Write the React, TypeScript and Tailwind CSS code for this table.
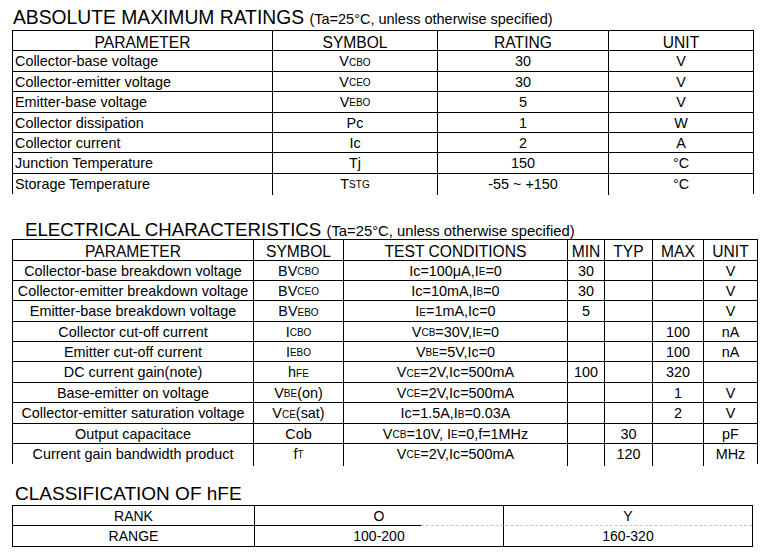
import type { ReactNode } from "react";

// small-caps style subscript used in the datasheet symbols
const Sub = ({ children }: { children: ReactNode }) => (
  <span className="text-[10px]">{children}</span>
);

type Cell = ReactNode;

export default function App() {
  const ratings: Cell[][] = [
    ["Collector-base voltage", <>V<Sub>CBO</Sub></>, "30", "V"],
    ["Collector-emitter voltage", <>V<Sub>CEO</Sub></>, "30", "V"],
    ["Emitter-base voltage", <>V<Sub>EBO</Sub></>, "5", "V"],
    ["Collector dissipation", "Pc", "1", "W"],
    ["Collector current", "Ic", "2", "A"],
    ["Junction Temperature", "Tj", "150", "°C"],
    ["Storage Temperature", <>T<Sub>STG</Sub></>, "-55 ~ +150", "°C"],
  ];

  const electrical: Cell[][] = [
    ["Collector-base breakdown voltage", <>BV<Sub>CBO</Sub></>, <>Ic=100μA,I<Sub>E</Sub>=0</>, "30", "", "", "V"],
    ["Collector-emitter breakdown voltage", <>BV<Sub>CEO</Sub></>, <>Ic=10mA,I<Sub>B</Sub>=0</>, "30", "", "", "V"],
    ["Emitter-base breakdown voltage", <>BV<Sub>EBO</Sub></>, <>I<Sub>E</Sub>=1mA,Ic=0</>, "5", "", "", "V"],
    ["Collector cut-off current", <>I<Sub>CBO</Sub></>, <>V<Sub>CB</Sub>=30V,I<Sub>E</Sub>=0</>, "", "", "100", "nA"],
    ["Emitter cut-off current", <>I<Sub>EBO</Sub></>, <>V<Sub>BE</Sub>=5V,Ic=0</>, "", "", "100", "nA"],
    ["DC current gain(note)", <>h<Sub>FE</Sub></>, <>V<Sub>CE</Sub>=2V,Ic=500mA</>, "100", "", "320", ""],
    ["Base-emitter on voltage", <>V<Sub>BE</Sub>(on)</>, <>V<Sub>CE</Sub>=2V,Ic=500mA</>, "", "", "1", "V"],
    ["Collector-emitter saturation voltage", <>V<Sub>CE</Sub>(sat)</>, <>Ic=1.5A,I<Sub>B</Sub>=0.03A</>, "", "", "2", "V"],
    ["Output capacitace", "Cob", <>V<Sub>CB</Sub> =10V, I<Sub>E</Sub> =0,f=1MHz</>, "", "30", "", "pF"],
    ["Current gain bandwidth product", <>f<Sub>T</Sub></>, <>V<Sub>CE</Sub>=2V,Ic=500mA</>, "", "120", "", "MHz"],
  ];

  return (
    <div className="w-[768px] h-[560px] bg-white text-black font-['Liberation_Sans',Arial,sans-serif] overflow-hidden pt-[7px]">
      {/* Absolute maximum ratings */}
      <div className="pl-[13px] h-[22px] leading-[22px] text-[19.3px] whitespace-nowrap">
        ABSOLUTE MAXIMUM RATINGS{" "}
        <span className="text-[14.5px]">(Ta=25°C, unless otherwise specified)</span>
      </div>
      <div className="ml-[12px] mt-[1px] w-[742px] border-l border-r border-t border-black">
        <div className="grid grid-cols-[260px_165px_171px_1fr] h-[20.4px] border-b border-black text-[15.6px]">
          {["PARAMETER", "SYMBOL", "RATING", "UNIT"].map((h, i) => (
            <div key={h} className={`flex items-center justify-center ${i < 3 ? "border-r border-black" : ""}`}>
              {h}
            </div>
          ))}
        </div>
        {ratings.map((row, r) => (
          <div
            key={r}
            className={`grid grid-cols-[260px_165px_171px_1fr] h-[20.4px] text-[14.4px] ${r < ratings.length - 1 ? "border-b border-black" : ""}`}
          >
            {row.map((c, i) => (
              <div
                key={i}
                className={`flex items-center whitespace-nowrap ${i === 0 ? "pl-[2px]" : "justify-center"} ${i < 3 ? "border-r border-black" : ""}`}
              >
                {c}
              </div>
            ))}
          </div>
        ))}
      </div>

      {/* Electrical characteristics */}
      <div className="pl-[25px] mt-[26px] h-[19px] leading-[19px] text-[18.7px] whitespace-nowrap">
        ELECTRICAL CHARACTERISTICS{" "}
        <span className="text-[14.8px]">(Ta=25°C, unless otherwise specified)</span>
      </div>
      <div className="ml-[12px] w-[746px] border-l border-r border-t border-black">
        <div className="grid grid-cols-[241px_90px_224px_37px_48px_51px_1fr] h-[20.4px] border-b border-black text-[15.6px]">
          {["PARAMETER", "SYMBOL", "TEST CONDITIONS", "MIN", "TYP", "MAX", "UNIT"].map((h, i) => (
            <div key={h} className={`flex items-center justify-center whitespace-nowrap ${i < 6 ? "border-r border-black" : ""}`}>
              {h}
            </div>
          ))}
        </div>
        {electrical.map((row, r) => (
          <div
            key={r}
            className={`grid grid-cols-[241px_90px_224px_37px_48px_51px_1fr] h-[20.4px] text-[14.4px] ${r < electrical.length - 1 ? "border-b border-black" : ""}`}
          >
            {row.map((c, i) => (
              <div
                key={i}
                className={`flex items-center justify-center whitespace-nowrap ${i < 6 ? "border-r border-black" : ""}`}
              >
                {c}
              </div>
            ))}
          </div>
        ))}
      </div>

      {/* Classification of hFE */}
      <div className="pl-[15px] mt-[20px] h-[19px] leading-[19px] text-[19px] whitespace-nowrap">
        CLASSIFICATION OF hFE
      </div>
      <div className="ml-[12px] mt-[2px] w-[741px] border border-black text-[14px]">
        <div className="grid grid-cols-[242px_249px_1fr] h-[19px]">
          <div className="flex items-center justify-center border-r border-black">RANK</div>
          <div className="flex items-center justify-center border-r border-black">O</div>
          <div className="flex items-center justify-center">Y</div>
        </div>
        <div className="flex h-px">
          <div className="w-[408px] bg-black" />
          <div className="flex-1 border-t border-dashed border-[#c4c4c4]" />
        </div>
        <div className="grid grid-cols-[242px_249px_1fr] h-[20px]">
          <div className="flex items-center justify-center border-r border-black">RANGE</div>
          <div className="flex items-center justify-center border-r border-black">100-200</div>
          <div className="flex items-center justify-center">160-320</div>
        </div>
      </div>
    </div>
  );
}
